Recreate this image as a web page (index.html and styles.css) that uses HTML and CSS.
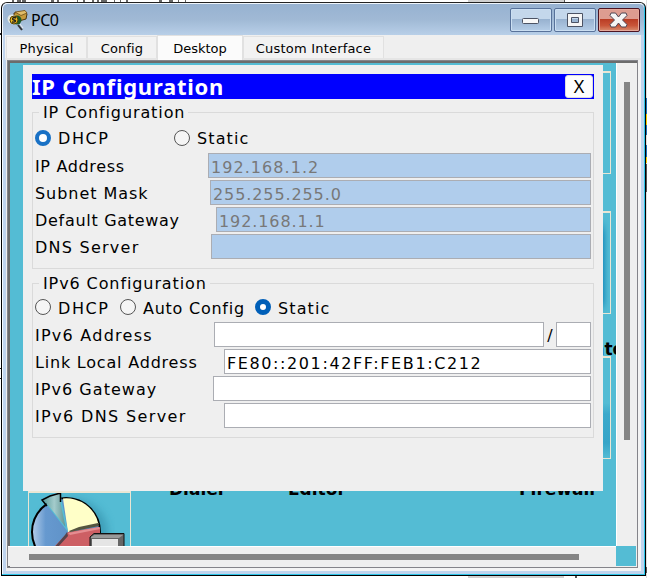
FILE: index.html
```html
<!DOCTYPE html>
<html lang="en">
<head>
<meta charset="utf-8">
<title>PC0</title>
<link rel="stylesheet" href="styles.css">
</head>
<body>
<div class="backdrop" aria-hidden="true">
  <svg width="647" height="578" viewBox="0 0 647 578">
    <path d="M0 0H647V578H0Z" fill="#fff"/>
    <path d="M468 0h96v3h-96zM468 576h96v2h-96z" fill="#d0d0d0"/>
    <path d="M564 0h1v4h-1zM575 576h2v2h-2z" fill="#555"/>
    <path d="M12 1h2M17 1h4M22 1h4M51 1h3M57 1h2M77 1h1M83 1h2M92 1h2M97 1h2M101 1h6M114 1h1M120 1h1M126 1h2M159 1h3M169 1h4M178 1h1M185 1h1" stroke="#666" stroke-width="2"/>
    <path d="M646 0h1v578h-1z" fill="#ddd"/>
    <path d="M646 98h1v16h-1zM646 125h1v10h-1zM646 145h1v12h-1z" fill="#1b6eb5"/>
    <path d="M646 114h1v11h-1zM646 157h1v6h-1z" fill="#f3cd00"/>
    <path d="M646 164h1v28h-1zM646 567h1v6h-1z" fill="#555"/>
    <path d="M0 368h1v1H0zM0 378h1v1H0zM0 33h1v2H0z" fill="#222"/>
  </svg>
</div>
<div class="window">
  <header class="titlebar">
    <svg class="appicon" width="22" height="22" viewBox="0 0 22 22">
      <path d="M7 4 18 2 20 5 19 10 12 12 7 8Z" fill="#c69a3b" stroke="#4b3510"/>
      <path d="M8 3 18 1.500 20 4 14 6.500Z" fill="#e1bd69" stroke="#6d4c18" stroke-width=".8"/>
      <circle cx="5" cy="10" r="4.500" fill="#f5f5e8" opacity=".8"/>
      <circle cx="10" cy="11" r="4.500" fill="#1d5a28"/>
      <circle cx="7" cy="11" r="4" fill="#f0bd20" stroke="#544000"/>
      <path d="M9 9C5.500 7.500 4.500 10.500 7 11S9 13.500 5 13" fill="none" stroke="#222" stroke-width="1.400"/>
      <path d="M11 16 15 21" stroke="#333" stroke-width="2"/><path d="M13 15 16 19" stroke="#eee"/>
    </svg>
    <span class="title">PC0</span>
    <div class="controls">
      <button class="ctl"><svg width="40" height="22"><rect x="11.500" y="9.500" width="16" height="5" rx="1" fill="#f8f8f8" stroke="#4c5364"/></svg></button>
      <button class="ctl"><svg width="40" height="22"><path d="M12.500 4.500H27.500V17.500H12.500Z M16.500 8.500V13.500H23.500V8.500Z" fill="#f5f5f5" fill-rule="evenodd" stroke="#4c5364"/></svg></button>
      <button class="ctl close"><svg width="40" height="22"><path d="M12 4H16.500L19.500 8 22.500 4H27L28 6.500 23.500 11 28 15.500 27 18H22.500L19.500 14 16.500 18H12L11 15.500 15.500 11 11 6.500Z" fill="#f5f5f5" stroke="#4f4653" stroke-linejoin="round"/></svg></button>
    </div>
  </header>
  <nav class="tabs">
    <span class="tab physical">Physical</span><span class="tab config">Config</span><span class="tab desktop active">Desktop</span><span class="tab custom">Custom Interface</span>
  </nav>
  <main class="view">
    <div class="canvas">
      <div class="tile t1"></div>
      <div class="tile t2"></div>
      <div class="tile t3"></div>
      <span class="app a1">Dialer</span>
      <span class="app a2">Editor</span>
      <span class="app a3">Firewall</span>
      <span class="app a4">ator</span>
      <div class="tile pie">
        <svg width="100" height="60" viewBox="0 0 100 60">
          <defs>
            <linearGradient id="b" x1="0" x2="1"><stop offset="0" stop-color="#b4cdea"/><stop offset=".2" stop-color="#6699cf"/><stop offset="1" stop-color="#5688bf"/></linearGradient>
            <linearGradient id="g" x1="0" x2="1"><stop offset="0" stop-color="#5b9c9c"/><stop offset=".5" stop-color="#a4cccc"/><stop offset="1" stop-color="#609494"/></linearGradient>
            <filter id="s"><feGaussianBlur stdDeviation="4"/></filter>
          </defs>
          <circle cx="44" cy="41" r="35" fill="#277f9b" opacity=".5" filter="url(#s)"/>
          <circle cx="37" cy="39" r="34" fill="url(#b)" stroke="#000" stroke-width="2"/>
          <path d="M39 39 26 53 22 60H71V34Z" fill="#cd5f64"/>
          <path d="M39 39 34 5.500A33 33 0 0 1 69.500 31Z" fill="#ffffc8"/>
          <path d="M40 38 50 34 69 30 70 33 41 39Z" fill="#55553f"/>
          <path d="M39 40 70 34 71 36 41 42Z" fill="#e58d91"/>
          <path d="M38 39 36 42 24 56 29 54 39 43Z" fill="#303840" opacity=".75"/>
          <path d="M39 39 17 11 32 4Z" fill="#55bcd4"/>
          <path d="M36.500 34 19 12 14 7 22 2 31.500 0V10Z" fill="url(#g)"/>
          <path d="M18 13 13 7 21 3 31.500 0V9" fill="none" stroke="#000" stroke-width="1.500"/>
          <path d="M61 44 65 40.500H95V60H61Z" fill="#666" stroke="#111"/>
          <path d="M62 44 65 42H94L90 45H62Z" fill="#999"/>
          <path d="M63 46H89V60H63Z" fill="#e5e5e5"/>
        </svg>
      </div>
      <section class="dialog">
        <div class="heading"><h1>IP Configuration</h1><button class="x">X</button></div>
        <fieldset class="group g4">
          <legend class="l4">IP Configuration</legend>
          <div class="radios r4">
            <label class="radio on"><i></i><span class="dhcp">DHCP</span></label>
            <label class="radio"><i></i><span class="static">Static</span></label>
          </div>
          <div class="row"><span class="label f1">IP Address</span><div class="field w1">192.168.1.2</div></div>
          <div class="row"><span class="label f2">Subnet Mask</span><div class="field w2">255.255.255.0</div></div>
          <div class="row"><span class="label f3">Default Gateway</span><div class="field w3">192.168.1.1</div></div>
          <div class="row"><span class="label f4">DNS Server</span><div class="field w4"></div></div>
        </fieldset>
        <fieldset class="group g6">
          <legend class="l6">IPv6 Configuration</legend>
          <div class="radios r6">
            <label class="radio"><i></i><span class="dhcp">DHCP</span></label>
            <label class="radio"><i></i><span class="auto">Auto Config</span></label>
            <label class="radio on deep"><i></i><span class="static">Static</span></label>
          </div>
          <div class="row"><span class="label f5">IPv6 Address</span><div class="field w5"></div><span class="slash">/</span><div class="field prefix"></div></div>
          <div class="row"><span class="label f6">Link Local Address</span><div class="field w6">FE80::201:42FF:FEB1:C212</div></div>
          <div class="row"><span class="label f7">IPv6 Gateway</span><div class="field w7"></div></div>
          <div class="row"><span class="label f8">IPv6 DNS Server</span><div class="field w8"></div></div>
        </fieldset>
      </section>
    </div>
    <div class="vbar"><div class="vthumb"></div></div>
    <div class="hbar"><div class="hthumb"></div></div>
    <div class="corner"></div>
  </main>
</div>
</body>
</html>
```
FILE: styles.css
```css
* { box-sizing: border-box; }
body { margin: 0; width: 647px; height: 578px; overflow: hidden; position: relative; font-family: "DejaVu Sans", sans-serif; color: #000; background: #fff; }
.backdrop { position: absolute; inset: 0; z-index: -1; }
.backdrop svg { display: block; }
svg { display: block; }
button { padding: 0; font: inherit; }

.window { width: 645px; height: 574px; margin: 2px 0 0 1px; border: 1px solid #000; border-top-color: #222; border-radius: 6px 6px 0 0; background: #efefef; box-shadow: inset -1px -1px #2bc5e8, inset 1px 1px #f5faff, inset 4px -4px #bfd4ee, inset -4px 0 #bfd4ee; }
.titlebar { display: flex; height: 32px; margin: 0 1px; padding: 5px 4px 0 4px; border-top: 1px solid #eef5fc; border-radius: 5px 5px 0 0; background: linear-gradient(#97b2d1, #a0b9d5 50%, #b8cfe8); }
.title { margin: 0 0 0 2px; font: 16px/22px "Noto Sans", sans-serif; letter-spacing: -0.5px; }
.controls { display: flex; gap: 2px; margin: -1px 0 0 auto; }
.ctl { width: 42px; height: 24px; border: 1px solid #58729a; border-radius: 2px; background: linear-gradient(#c4d7eb 0 45%, #97b1cf 46%, #b5cde7); box-shadow: inset 0 0 0 1px #cbdff2; }
.ctl.close { border-color: #4c1422; background: linear-gradient(#dd9c90 0 45%, #b93c24 46%, #c95539 75%, #d88e70); box-shadow: inset 0 0 0 1px #e6a99b; }

.tabs { display: flex; align-items: flex-end; height: 25px; margin: 0 4px 0 3px; padding-left: 1px; border-bottom: 2px solid #e5e5e5; background: #efefef; font-size: 13px; }
.tab { height: 22px; padding-top: 2px; border: 1px solid #e1e1e1; border-bottom: 0; background: #f2f2f2; line-height: 20px; white-space: nowrap; text-align: center; }
.physical { width: 81px; letter-spacing: .12px; }
.config { width: 70px; letter-spacing: .1px; }
.desktop { width: 86px; }
.custom { width: 141px; letter-spacing: .2px; }
.tab.active { height: 25px; margin-bottom: -2px; background: #fbfbfb; line-height: 21px; }

.view { display: grid; grid-template: 483px 20px / 606px 20px; width: 631px; height: 508px; margin-left: 5px; border: 1px solid #84848a; box-shadow: inset 2px 2px #6c6c6c, 3px 3px #f4f4f4; padding: 2px 0 0 2px; background: #efefef; }
.canvas { position: relative; overflow: hidden; background: #54bcd4; }
.vbar { border-left: 1px solid #fff; padding: 19px 0 0 7px; }
.vthumb { width: 6px; height: 358px; background: #858585; }
.hbar { margin-left: -2px; border-top: 1px solid #fff; padding: 7px 0 0 21px; background: #efefef; }
.hthumb { width: 550px; height: 6px; background: #858585; }
.corner { background: #54bcd4; }

.tile { position: absolute; width: 102px; border: 1px solid #eae6d4; border-top-width: 2px; }
.t1 { left: 499px; top: 8px; height: 103px; }
.t2 { left: 499px; top: 148px; height: 103px; background: linear-gradient(90deg, #1687b8 92px, #54bcd4); box-shadow: inset 0 14px 12px #54bcd4, inset 0 -7px 10px #54bcd4; }
.t3 { left: 499px; top: 293px; height: 103px; background: linear-gradient(transparent 45px, #3ca9cb 56px, #37a5c8 85px, transparent); }
.pie { left: 18px; top: 428px; width: 103px; height: 70px; }
.pie svg { position: absolute; left: 0; top: 0; }
.app { position: absolute; font-size: 17px; font-weight: 700; line-height: 20px; white-space: nowrap; }
.a1 { left: 159px; top: 416px; }
.a2 { left: 278px; top: 416px; }
.a3 { left: 509px; top: 416px; }
.a4 { left: 583px; top: 276px; }

.dialog { position: absolute; left: 13px; top: 2px; width: 580px; height: 426px; padding: 9px; background: #efefef; }
.heading { display: flex; align-items: center; justify-content: space-between; height: 25px; padding-right: 1px; background: #00f; }
h1 { margin: 0; color: #fff; font: 700 22px/25px "Noto Sans", sans-serif; letter-spacing: .75px; white-space: nowrap; }
.x { width: 28px; height: 23px; border: 1px solid #ddd; border-radius: 3px; background: #fdfdfd; font: 18px/19px "Noto Sans", sans-serif; }
.group { position: relative; margin: 0; padding: 0 2px 0 3px; min-width: 0; border: 1px solid #dadada; }
legend { height: 22px; margin-left: 3px; padding: 0 3px 0 4px; line-height: 23px; white-space: nowrap; letter-spacing: .9px; }
.group, .field { font-size: 16px; }
.g4 { height: 168px; margin-top: 2px; }
.g6 { height: 166px; margin-top: 3px; }
.radios { display: flex; align-items: center; height: 24px; }
.r4 { margin: 3px 0 3px; }
.r6 { margin: 1px 0 3px; }
.radio { display: flex; align-items: center; white-space: nowrap; }
.radio i { flex: none; width: 16px; height: 16px; margin: 0 7px 0 -1px; border: 1px solid #555; border-radius: 50%; background: #f5f5f5; }
.radio.on i { border: 4.5px solid #1971c5; background: #fff; }
.radio.deep i { border: 5px solid #005fb8; }
.r6 .radio span { padding-top: 2px; }
.dhcp { letter-spacing: 1.6px; }
.static { letter-spacing: 1.1px; }
.auto { letter-spacing: .75px; }
.r4 .radio:first-child { width: 139px; }
.r6 .radio:nth-child(1) { width: 85px; }
.r6 .radio:nth-child(2) { width: 135px; }
.row { display: flex; height: 25px; margin-bottom: 2px; line-height: 27px; }
.label { white-space: nowrap; margin-left: -1px; }
.f1 { letter-spacing: .65px; }
.f2 { letter-spacing: .95px; }
.f3 { letter-spacing: .7px; }
.f4 { letter-spacing: 1.25px; }
.f5 { letter-spacing: 1.25px; }
.f6 { letter-spacing: .8px; }
.f7 { letter-spacing: 1.05px; }
.f8 { letter-spacing: 1.38px; }
.field { margin-left: auto; height: 25px; border: 1px solid #abadb3; background: #fff; padding-left: 2px; line-height: 27px; white-space: nowrap; }
.g4 .field { background: #b0cdec; color: #787878; }
.w1 { width: 383px; letter-spacing: 1.05px; }
.w2 { width: 381px; letter-spacing: .9px; }
.w3 { width: 375px; letter-spacing: .9px; }
.w4 { width: 380px; }
.w5 { width: 330px; }
.w6 { width: 367px; letter-spacing: 1.6px; }
.w7 { width: 378px; }
.w8 { width: 367px; }
.slash { width: 12px; text-align: center; }
.prefix { width: 35px; margin-left: 0; }
```
